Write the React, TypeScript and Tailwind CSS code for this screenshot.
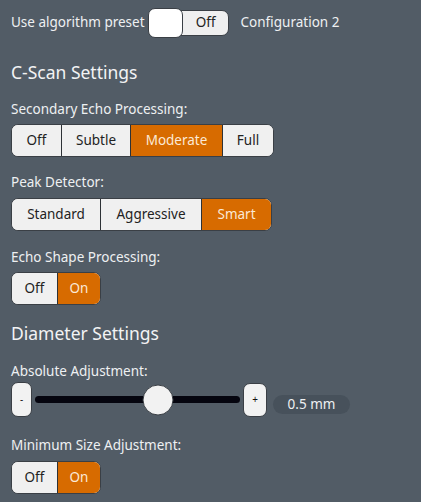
import React, { useState } from 'react';

const font = { fontFamily: '"Noto Sans", "DejaVu Sans", sans-serif' };

type SegProps = {
  options: string[];
  widths: string[];
  value: string;
  onChange: (v: string) => void;
};

// segmented button group, selected one turns orange
const Segmented: React.FC<SegProps> = ({ options, widths, value, onChange }) => (
  <div className="flex h-[33px] rounded-[7px] border border-[#3a3f45] overflow-hidden bg-[#f0f0f0]">
    {options.map((opt, i) => {
      const active = opt === value;
      return (
        <button
          key={opt}
          onClick={() => onChange(opt)}
          className={`${widths[i]} h-full flex items-center justify-center text-[13.5px] ${
            i > 0 ? 'border-l border-[#2e3236]' : ''
          } ${active ? 'bg-[#d76b00] text-[#fbe9d6]' : 'bg-[#f0f0f0] text-[#222]'}`}
        >
          {opt}
        </button>
      );
    })}
  </div>
);

const Label: React.FC<{ children: React.ReactNode }> = ({ children }) => (
  <div className="text-[13.5px] text-[#eef0f2] leading-none">{children}</div>
);

const Heading: React.FC<{ children: React.ReactNode }> = ({ children }) => (
  <div className="text-[17.5px] text-[#f2f3f4] leading-none">{children}</div>
);

const MIN = -2.5;
const MAX = 2.5;

export default function App() {
  const [preset, setPreset] = useState(false);
  const [echo, setEcho] = useState('Moderate');
  const [peak, setPeak] = useState('Smart');
  const [shape, setShape] = useState('On');
  const [minSize, setMinSize] = useState('On');
  const [adjust, setAdjust] = useState(0.5);

  const pct = ((adjust - MIN) / (MAX - MIN)) * 100;

  return (
    <div className="w-[421px] h-[502px] bg-[#525c66] overflow-hidden px-[11px]" style={font}>
      {/* preset row */}
      <div className="flex items-center h-[44px] pt-[1px]">
        <span className="text-[13.5px] text-[#eef0f2] mr-[3px]">Use algorithm preset</span>
        <button
          onClick={() => setPreset(!preset)}
          className="relative w-[81px] h-[26px] rounded-[7px] bg-[#efefef] border border-[#3a3f45] flex items-center justify-end pr-[12px] text-[13.5px] text-[#222]"
        >
          {preset ? 'On' : 'Off'}
          <span className="absolute left-[-1px] top-[-3px] w-[35px] h-[30px] rounded-[7px] bg-white border border-[#3a3f45]" />
        </button>
        <span className="ml-[12px] text-[13.5px] text-[#eef0f2]">Configuration 2</span>
      </div>

      <div className="mt-[20px]">
        <Heading>C-Scan Settings</Heading>
      </div>

      <div className="mt-[21px]">
        <Label>Secondary Echo Processing:</Label>
      </div>
      <div className="mt-[8px] flex">
        <Segmented
          options={['Off', 'Subtle', 'Moderate', 'Full']}
          widths={['w-[49px]', 'w-[69px]', 'w-[92px]', 'w-[51px]']}
          value={echo}
          onChange={setEcho}
        />
      </div>

      <div className="mt-[19px]">
        <Label>Peak Detector:</Label>
      </div>
      <div className="mt-[8px] flex">
        <Segmented
          options={['Standard', 'Aggressive', 'Smart']}
          widths={['w-[88px]', 'w-[101px]', 'w-[70px]']}
          value={peak}
          onChange={setPeak}
        />
      </div>

      <div className="mt-[20px]">
        <Label>Echo Shape Processing:</Label>
      </div>
      <div className="mt-[8px] flex">
        <Segmented options={['Off', 'On']} widths={['w-[45px]', 'w-[43px]']} value={shape} onChange={setShape} />
      </div>

      <div className="mt-[20px]">
        <Heading>Diameter Settings</Heading>
      </div>

      <div className="mt-[22px]">
        <Label>Absolute Adjustment:</Label>
      </div>
      <div className="mt-[4px] flex items-center h-[35px]">
        <button
          onClick={() => setAdjust(Math.max(MIN, +(adjust - 0.1).toFixed(1)))}
          className="w-[21px] h-[35px] rounded-[7px] bg-[#f2f2f2] border border-[#3a3f45] text-[10px] text-[#111] flex items-center justify-center"
        >
          -
        </button>
        <div className="relative w-[205px] h-[7px] ml-[3px] rounded-full bg-[#05050f]">
          <span
            className="absolute top-1/2 w-[31px] h-[31px] -translate-x-1/2 -translate-y-1/2 rounded-full bg-[#f2f2f2] border border-[#3a3f45]"
            style={{ left: `${pct}%` }}
          />
        </div>
        <button
          onClick={() => setAdjust(Math.min(MAX, +(adjust + 0.1).toFixed(1)))}
          className="w-[24px] h-[34px] ml-[3px] rounded-[7px] bg-[#f2f2f2] border border-[#3a3f45] text-[10px] text-[#111] flex items-center justify-center"
        >
          +
        </button>
        <div className="ml-[6px] mt-[10px] w-[77px] h-[19px] rounded-full bg-[#47515b] text-[13.5px] text-[#eef0f2] flex items-center justify-center">
          {adjust.toFixed(1)} mm
        </div>
      </div>

      <div className="mt-[22px]">
        <Label>Minimum Size Adjustment:</Label>
      </div>
      <div className="mt-[8px] flex">
        <Segmented options={['Off', 'On']} widths={['w-[45px]', 'w-[43px]']} value={minSize} onChange={setMinSize} />
      </div>
    </div>
  );
}
